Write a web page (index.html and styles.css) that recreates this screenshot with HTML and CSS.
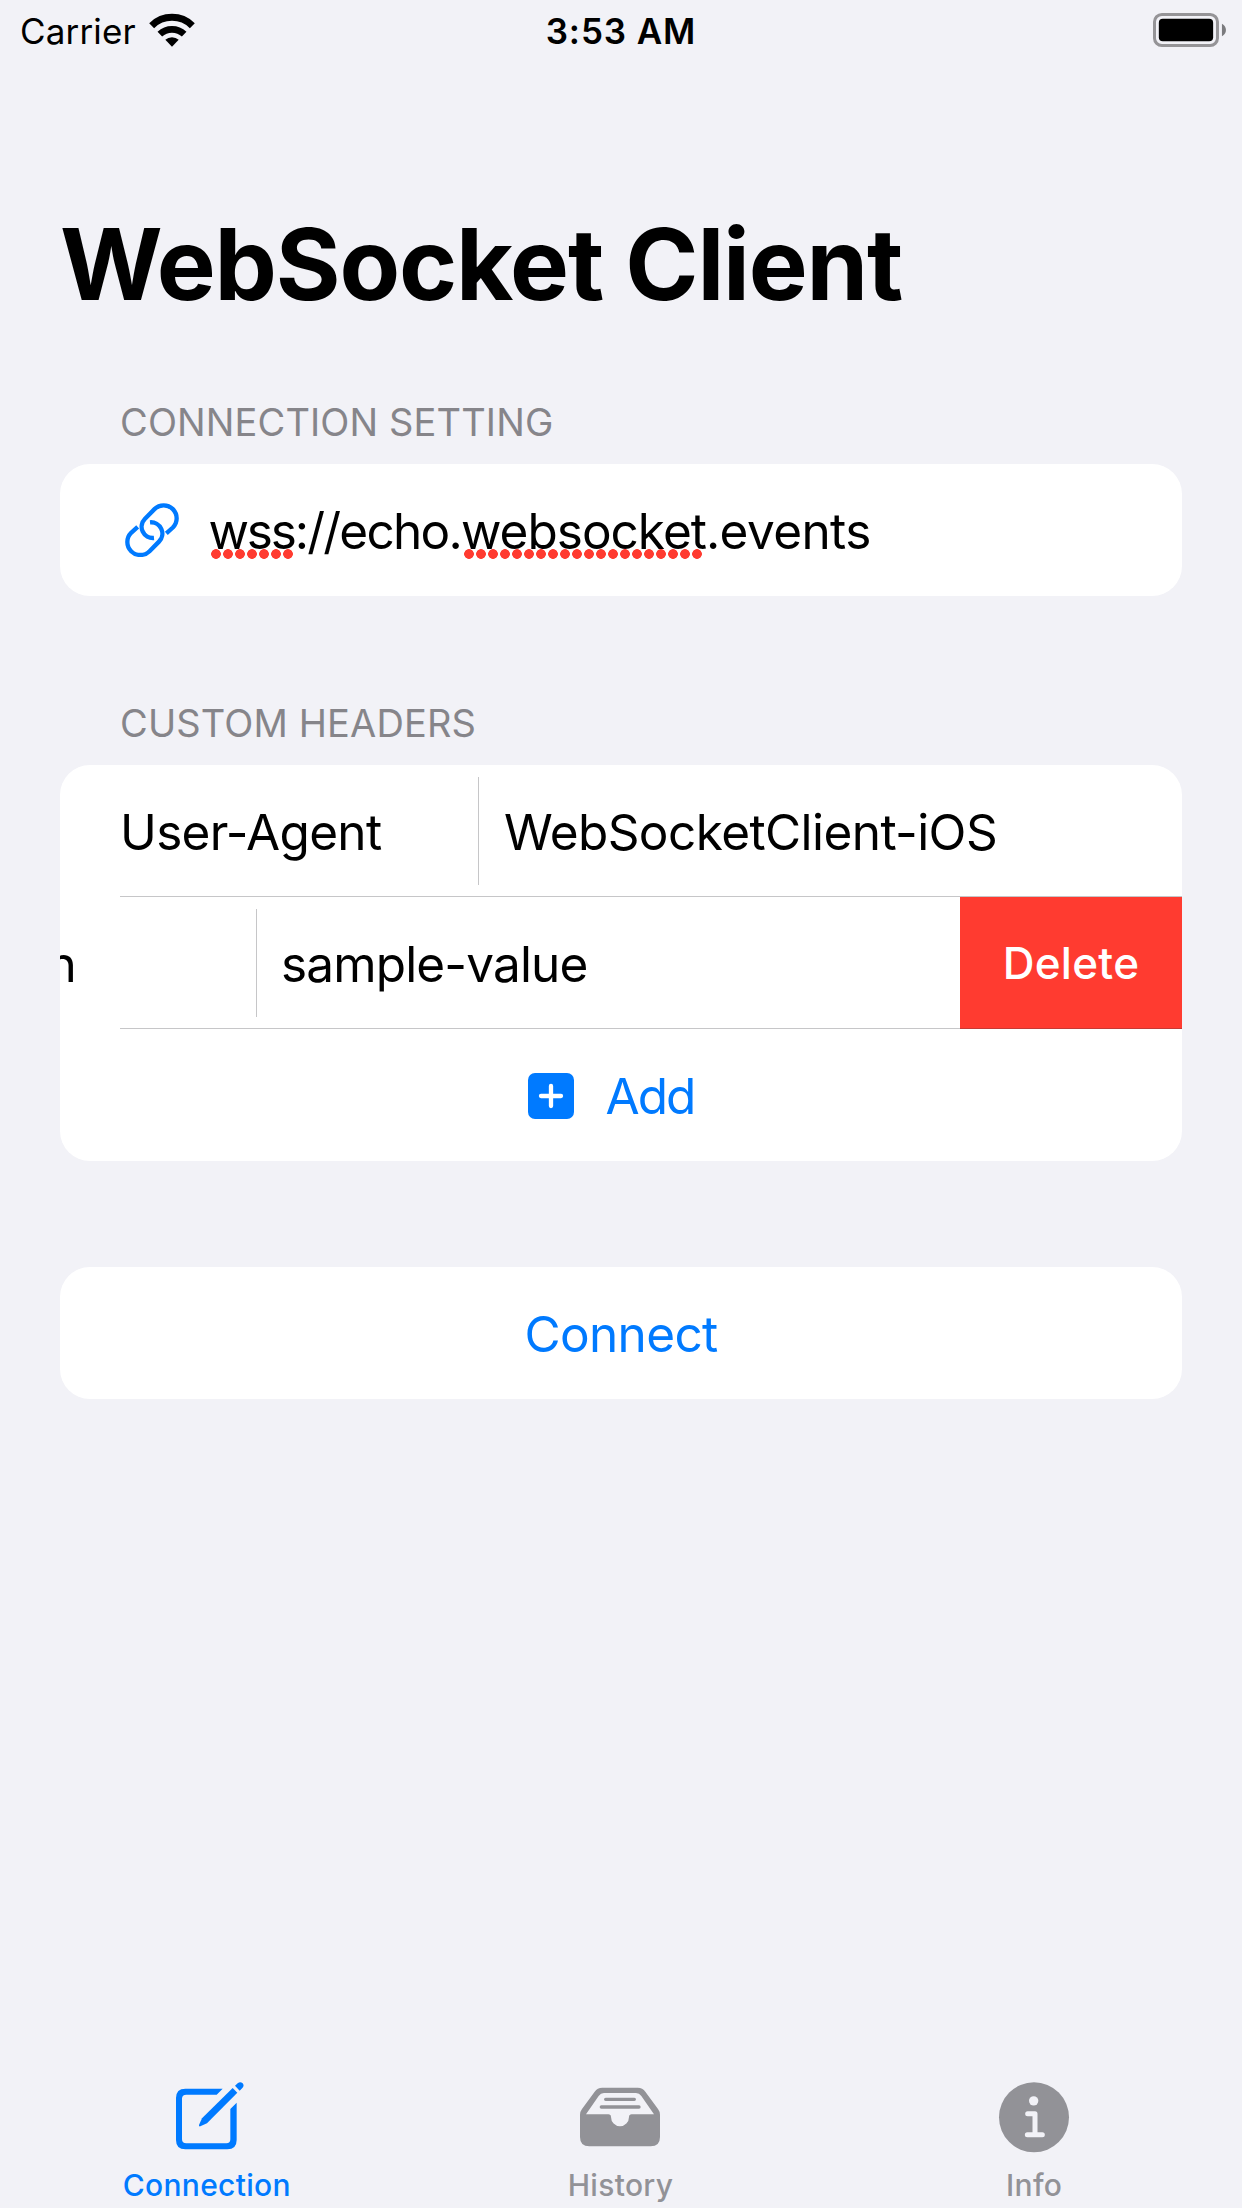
FILE: index.html
```html
<!DOCTYPE html>
<html lang="en">
<head>
<meta charset="utf-8">
<title>WebSocket Client</title>
<link rel="stylesheet" href="styles.css">
</head>
<body>
<div class="screen">
  <header class="status-bar">
    <div class="status-left">
      <span class="carrier">Carrier</span>
      <svg class="wifi" viewBox="447 38 138 102" fill="none" stroke="#000">
        <path stroke-width="21" d="M455 76A87 87 0 0 1 577 76"/>
        <path stroke-width="20" d="M479.500 101.500A53 53 0 0 1 552.500 101.500"/>
        <path stroke="none" fill="#000" d="M516 139L496 118.500A29 29 0 0 1 536 118.500Z"/>
      </svg>
    </div>
    <span class="clock">3:53 AM</span>
    <svg class="battery" viewBox="159 39 220 102">
      <rect x="163.500" y="43.500" width="189" height="93" rx="22" fill="none" stroke="#959497" stroke-width="9"/>
      <rect x="176.500" y="56.500" width="163" height="67" rx="12"/>
      <path fill="#7b7b7e" d="M366 71Q378 78 378 90T366 109Z"/>
    </svg>
  </header>

  <main class="content">
    <h1 class="title">WebSocket Client</h1>

    <section class="group">
      <h2 class="group-label">CONNECTION SETTING</h2>
      <div class="card">
        <div class="row url-row">
          <svg class="link-icon" viewBox="225 159 162 163" fill="none" stroke="#007aff" stroke-width="13">
            <path d="M349 250L368.600 232.600A39 39 0 0 0 313.400 177.400L285 206A34 34 0 0 0 312 264"/>
            <path transform="rotate(180 306 240.500)" d="M349 250L368.600 232.600A39 39 0 0 0 313.400 177.400L285 206A34 34 0 0 0 312 264"/>
          </svg>
          <span class="url"><span class="misspelled scheme">wss</span>://echo.<span class="misspelled domain">websocket</span><span class="tld">.events</span></span>
        </div>
      </div>
    </section>

    <section class="group">
      <h2 class="group-label">CUSTOM HEADERS</h2>
      <div class="card">
        <div class="row header-row">
          <span class="header-name">User-Agent</span>
          <span class="header-value">WebSocketClient-iOS</span>
        </div>
        <div class="row header-row swiped">
          <span class="header-name">n</span>
          <span class="header-value">sample-value</span>
          <button class="delete">Delete</button>
        </div>
        <button class="row add-row">
          <svg class="plus-icon" viewBox="0 0 46 46">
            <rect width="46" height="46" rx="7" fill="#007aff"/>
            <path d="M23 13V33M13 23H33" stroke="#fff" stroke-width="4.300" stroke-linecap="round"/>
          </svg>
          <span class="add">Add</span>
        </button>
      </div>
    </section>

    <div class="card connect-card">
      <button class="row connect-row"><span class="connect">Connect</span></button>
    </div>
  </main>

  <nav class="tab-bar">
    <a class="tab active">
      <svg class="tab-icon" viewBox="0 0 240 216">
        <g transform="translate(-201 -62)">
          <path fill="currentColor" d="M368 85H256Q228 85 228 113V239Q228 267 256 267H382Q410 267 410 239V127L391 146V237Q391 249 379 249H259Q246 249 246 237V115Q246 103 259 103H350Z"/>
          <path fill="currentColor" d="M398 83L412 97L321 189L301 198Q296 199 297 194L306 174Z"/>
          <path fill="currentColor" d="M405 76L413 69Q421 62 428 69Q434 76 427 83L419 91Z"/>
        </g>
      </svg>
      <span>Connection</span>
    </a>
    <a class="tab">
      <svg class="tab-icon" viewBox="0 0 240 216">
        <g transform="translate(-120 -62)">
          <path fill="currentColor" fill-rule="evenodd" d="M120 163Q120 154 126 146L164 94Q172 82 187 82H293Q308 82 316 94L354 146Q360 154 360 163V230Q360 258 332 258H148Q120 258 120 230ZM138 162H205Q213 162 213 170A27 28 0 0 0 267 170Q267 162 275 162H342L304 107Q298 98 288 98H192Q182 98 176 107Z"/>
          <path fill="none" stroke="currentColor" stroke-width="10" stroke-linecap="round" d="M197 117H283M184 140H297"/>
        </g>
      </svg>
      <span>History</span>
    </a>
    <a class="tab">
      <svg class="tab-icon" viewBox="0 0 240 216">
        <g transform="translate(-102 -62)">
          <circle cx="222" cy="171" r="105" fill="currentColor"/>
          <circle cx="221" cy="121.500" r="14" fill="#f2f2f7"/>
          <path fill="none" stroke="#f2f2f7" stroke-width="15" stroke-linecap="round" stroke-linejoin="round" d="M203 160H225V223M202 223H247"/>
        </g>
      </svg>
      <span>Info</span>
    </a>
  </nav>
</div>
</body>
</html>
```
FILE: styles.css
```css
* { box-sizing: border-box; }

body {
  margin: 0;
  background: #f2f2f7;
  color: #000;
  font-family: Inter, "Liberation Sans", sans-serif;
}

h1, h2 { margin: 0; }

button {
  border: 0;
  padding: 0;
  background: none;
  font: inherit;
}

svg { display: block; flex: none; }

.screen {
  display: flex;
  flex-direction: column;
  width: 1242px;
  height: 2208px;
  overflow: hidden;
}

/* Status bar */
.status-bar {
  display: grid;
  grid-template-columns: 1fr auto 1fr;
  height: 60px;
  padding: 0 16px;
  font-size: 35px;
  line-height: 62px;
}
.status-left { display: flex; gap: 13px; padding-left: 4px; }
.carrier { letter-spacing: 0.150px; }
.wifi { width: 46px; height: 34px; margin-top: 12.500px; }
.clock { font-weight: 560; letter-spacing: 0.900px; }
.battery { width: 73.300px; height: 34px; margin-top: 13px; justify-self: end; }

/* Page content */
.content { flex: 1; padding: 0 60px; }
.title {
  padding-top: 144px;
  font-size: 99px;
  font-weight: 700;
  line-height: 120px;
  letter-spacing: -1.150px;
}
.group-label {
  padding-left: 60px;
  color: #86858a;
  font-size: 38px;
  font-weight: 400;
  line-height: 48px;
  letter-spacing: 0.120px;
}
.group { margin-top: 74px; }
.group + .group { margin-top: 103px; }
.card {
  margin-top: 18px;
  border-radius: 30px;
  background: #fff;
  overflow: hidden;
}
.row {
  display: flex;
  align-items: center;
  width: 100%;
  height: 132px;
  font-size: 49.500px;
  line-height: 60px;
  white-space: nowrap;
}
.url-row { padding-left: 65px; }
.link-icon { width: 54px; height: 54.300px; }
.url { margin-left: 29.500px; padding-top: 2px; letter-spacing: -1.750px; }
.misspelled { position: relative; }
.scheme { letter-spacing: -2.200px; }
.domain { letter-spacing: -1px; }
.tld { letter-spacing: -0.600px; }
/* Spell-checker dots, drawn in whole 12px steps */
.misspelled::after {
  content: "";
  position: absolute;
  left: 2px;
  width: 84px;
  bottom: 2px;
  height: 10px;
  background: radial-gradient(circle at 5px 5px, #ff3b30 4.500px, transparent 5.200px) 0 0 / 12px 10px repeat-x;
}
.domain::after { left: 3px; width: 240px; }

/* Header rows */
.header-row { position: relative; }
.header-row::after {
  content: "";
  position: absolute;
  left: 60px;
  right: 0;
  bottom: 0;
  height: 1px;
  background: rgba(60, 60, 67, 0.29);
}
.header-name {
  flex: none;
  width: 419px;
  height: 108px;
  padding: 25px 0 0 60px;
  border-right: 1px solid #c6c6c8;
  letter-spacing: -0.700px;
}
.header-value {
  flex: none;
  height: 108px;
  padding: 25px 0 0 25px;
  letter-spacing: -0.580px;
}
.swiped .header-name {
  display: flex;
  width: 197px;
  justify-content: flex-end;
  padding: 25px 180px 0 0;
}
.swiped .header-value { padding-left: 24px; letter-spacing: -0.850px; }
.delete {
  display: flex;
  align-items: center;
  justify-content: center;
  width: 222px;
  height: 132px;
  margin-left: auto;
  background: #ff3b30;
  color: #fff;
  font-size: 44px;
  font-weight: 500;
  letter-spacing: 0.300px;
}
.add-row { justify-content: center; color: #007aff; }
.plus-icon { width: 46px; height: 46px; margin-top: 2px; }
.add { margin: 0 20px 0 32px; padding-top: 2px; letter-spacing: -2px; }
.connect-card { margin-top: 106px; }
.connect-row { justify-content: center; color: #007aff; }
.connect { padding-top: 2px; letter-spacing: -0.650px; }

/* Tab bar */
.tab-bar {
  display: grid;
  grid-template-columns: repeat(3, 1fr);
  height: 147px;
  padding-right: 1px;
}
.tab {
  display: flex;
  flex-direction: column;
  align-items: center;
  padding-top: 19.700px;
  color: #929297;
  font-size: 30px;
  font-weight: 500;
  line-height: 36px;
  letter-spacing: 0.300px;
}
.tab.active { color: #007aff; }
.tab-icon { width: 80px; height: 72px; margin-bottom: 14px; }
```
